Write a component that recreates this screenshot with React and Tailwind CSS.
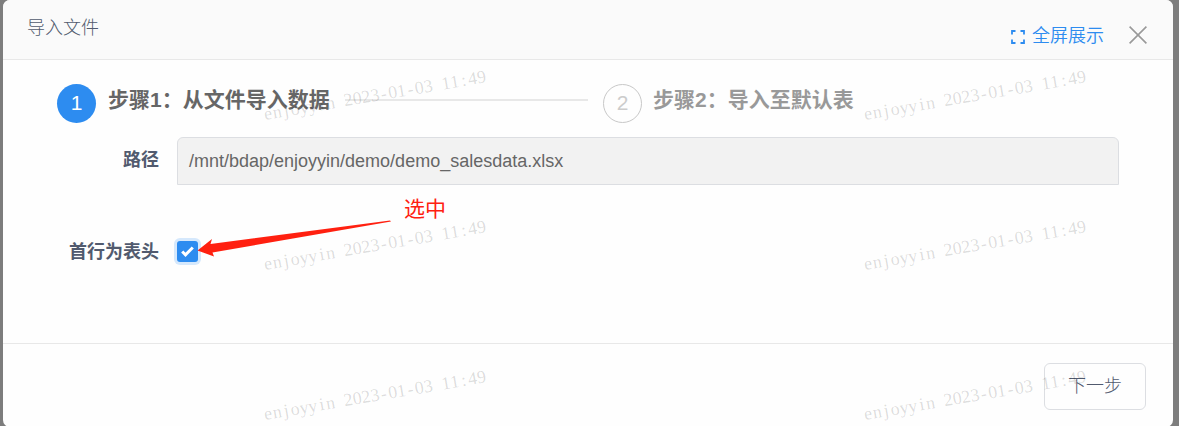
import React from "react";

const STAMP = "enjoyyin 2023-01-03 11:49";
const NARROW = { j: 2, i: 2, "-": 1.5, ":": 2 };
const STAMP_X = Array.from(STAMP, (c, i) => i * 9 + (NARROW[c] || 0)).join(" ");
const STAMPS = [[265, 120], [865, 120], [265, 270], [865, 270], [265, 420], [865, 420]];

const TRACE = "XINYUNZHOUKF1, 2023-01-03";
const TRACES = [[447, 274], [887, 238], [112, 409], [785, 135], [246, 73], [985, 340], [12, 300], [668, 372], [380, 143]];

function Watermark() {
  return (
    <svg className="pointer-events-none absolute inset-0" width="1179" height="426" aria-hidden="true">
      {TRACES.map(([x, y]) => (
        <text key={`${x}-${y}`} transform={`translate(${x} ${y}) rotate(-45)`} className="fill-black/[0.018] font-['Liberation_Mono',monospace] text-[17.5px]">
          {TRACE}
        </text>
      ))}
      {STAMPS.map(([x, y]) => (
        <text key={`${x}-${y}`} x={STAMP_X} transform={`translate(${x} ${y}) rotate(-9.7)`} className="fill-black/[0.14] font-['Liberation_Serif',serif] text-[18px]">
          {STAMP}
        </text>
      ))}
    </svg>
  );
}

function Arrow() {
  return (
    <svg className="pointer-events-none absolute left-[197px] top-[218px]" width="196" height="42" viewBox="197 218 196 42" aria-hidden="true">
      <path d="M197.5 250.5 212 239l-1.5 5L390 220.5l1 1L212.500 252.500l1.500 4Z" fill="#ff2010" />
    </svg>
  );
}

function Header() {
  return (
    <header className="flex h-[60px] shrink-0 justify-between border-b border-[#e8e8e8] bg-[#fafafa] pl-6 pr-[26px]">
      <h1 className="pt-[15px] text-[18px] font-light leading-[27px] text-[#515a6e]">导入文件</h1>
      <div className="flex items-start">
        <button className="mt-[23px] flex items-center text-[18px] font-[350] leading-[27px] text-[#2d8cf0]">
          <svg className="mr-[7px]" width="14" height="14" viewBox="0 0 14 14" fill="none" stroke="currentColor" strokeWidth="1.8">
            <path d="M1 4.5V1h3.500M9.500 1H13v3.500M13 9.500V13H9.500M4.500 13H1V9.500" />
          </svg>
          全屏展示
        </button>
        <button className="ml-[25px] mt-[26px]" aria-label="关闭">
          <svg width="18" height="18" viewBox="0 0 18 18" stroke="#999" strokeWidth="1.6">
            <path d="M.6.6 17.4 17.4M17.4.6.6 17.4" />
          </svg>
        </button>
      </div>
    </header>
  );
}

function Steps() {
  return (
    <div className="flex h-[39px] items-start pl-[54px]">
      <div className="flex size-[39px] items-center justify-center rounded-full bg-[#2d8cf0] pb-[2px] text-[21px] text-white">1</div>
      <div className="ml-3 w-[222px] whitespace-nowrap text-[21px] font-bold leading-[31px] text-[#666]">步骤1：从文件导入数据</div>
      <div className="ml-[15px] mt-[15px] h-[2px] w-[243px] bg-[#e8e8e8]" />
      <div className="ml-[15px] flex size-[39px] items-center justify-center rounded-full border border-[#c8c8c8] pb-[2px] text-[21px] text-[#ccc]">2</div>
      <div className="ml-[11px] whitespace-nowrap text-[21px] font-bold leading-[31px] text-[#999]">步骤2：导入至默认表</div>
    </div>
  );
}

export default function App() {
  return (
    <div className="relative h-[426px] w-[1179px] overflow-hidden bg-[#7d7d7d] pl-[3px] pr-[6px] font-['Liberation_Sans','Noto_Sans_CJK_SC',sans-serif]">
      <section className="flex h-[427px] flex-col overflow-hidden rounded-[7px] bg-[#fefefe]">
        <Header />
        <main className="flex h-[283px] shrink-0 flex-col pt-6">
          <Steps />
          <div className="mt-[14px] flex h-[48px]">
            <label className="w-[156px] pt-[10px] text-right text-[18px] font-bold leading-[27px] text-[#515a6e]">路径</label>
            <div className="ml-[18px] flex w-[942px] items-center rounded-t-[6px] border border-[#dcdee2] bg-[#f2f2f2] pl-[11px] text-[18px] text-[#666]">
              /mnt/bdap/enjoyyin/demo/demo_salesdata.xlsx
            </div>
          </div>
          <div className="mt-[53px] flex h-[27px] items-center">
            <label className="w-[156px] pt-[2px] text-right text-[18px] font-bold leading-[27px] text-[#515a6e]">首行为表头</label>
            <span className="ml-[18px] flex size-[21px] items-center justify-center rounded-[3px] bg-[#2d8cf0] ring-3 ring-[#d5e8fc]" role="checkbox" aria-checked="true">
              <svg width="13" height="11" viewBox="0 0 13 11" fill="none" stroke="white" strokeWidth="3">
                <path d="m1.2 5.500 3.300 3.300L11.800 1.500" />
              </svg>
            </span>
          </div>
        </main>
        <footer className="flex h-[84px] shrink-0 items-start justify-end border-t border-[#e8e8e8] pr-[27px] pt-[19px]">
          <button className="h-[47px] w-[102px] rounded-[6px] border border-[#dcdee2] text-[18px] font-light text-[#515a6e]">下一步</button>
        </footer>
      </section>
      <Watermark />
      <Arrow />
      <span className="absolute left-[404px] top-[193px] text-[21px] leading-[31px] text-[#ff2010]">选中</span>
    </div>
  );
}
